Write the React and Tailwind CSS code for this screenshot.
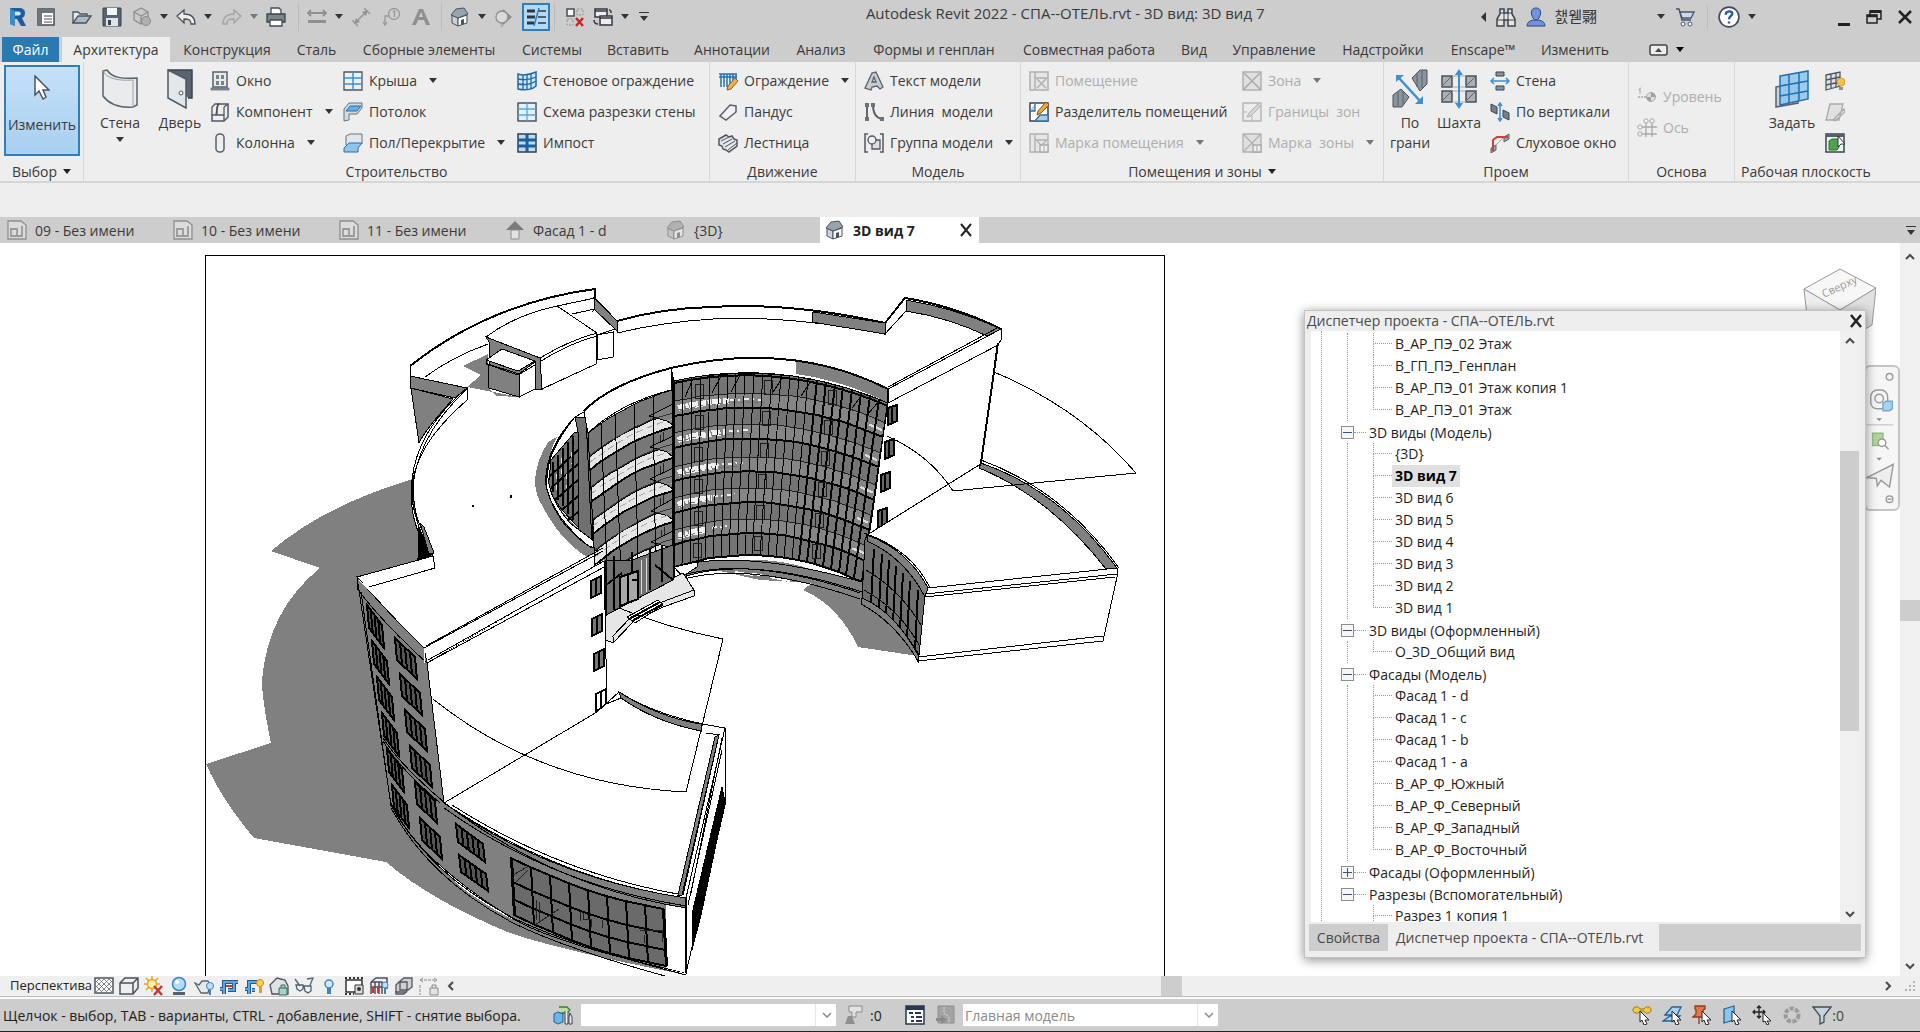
import React, { useState } from 'react';

/* 20x20 icons used by the ribbon and the bars */
const ICONS = {
  logo: (
    <>
      <path d="M2 1h9c4 0 6 2 6 5 0 2.5-1 4-3 5l4 8h-5l-4-7H7v7l-5-2z" fill="#1d5c9e" />
      <path d="M7 4.5h3.5c3 0 3 4 0 4H7z" fill="#cbe3f5" />
      <path d="M2 1l5 3.5V19l-5-2z" fill="#3b8ccb" />
    </>
  ),
  props: (
    <>
      <path d="M2 2h16v16H2z" fill="#fff" stroke="#444c55" strokeWidth="1.5" />
      <path d="M2 2h16v4H2zM2 6h4v12H2z" fill="#6c757e" />
      <path d="M8 9h8M8 12h8M8 15h8" stroke="#444c55" />
    </>
  ),
  open: (
    <>
      <path d="M1 16V5h5l2 2h7v3" fill="#e8edf2" stroke="#4b535b" strokeWidth="1.3" />
      <path d="M1 16l5-7h13l-5 7z" fill="#a9bccd" stroke="#4b535b" strokeWidth="1.3" />
    </>
  ),
  save: (
    <>
      <path d="M1 1h18v18H1z" fill="#5a6470" stroke="#38404a" />
      <path d="M5 1h10v7H5z" fill="#f2f4f6" />
      <path d="M4 11h12v8H4z" fill="#dfe4e8" />
      <path d="M6 13h3v5H6z" fill="#38404a" />
    </>
  ),
  sync: (
    <>
      <path d="M9 1l7 4v8l-7 4-7-4V5z" fill="#c9c9c9" stroke="#8f8f8f" strokeWidth="1.3" />
      <path d="M2 5l7 4 7-4M9 9v8" stroke="#8f8f8f" fill="none" strokeWidth="1.3" />
      <circle cx="14" cy="14" r="4.5" fill="#b0b0b0" stroke="#8b8b8b" />
    </>
  ),
  undo: <path d="M1 9l7-6v4c7 0 11 3 11 10h-4c0-4-2-5-7-5v4z" fill="#eee" stroke="#4b535b" strokeWidth="1.3" />,
  redo: <path d="M19 9l-7-6v4C5 7 1 10 1 17h4c0-4 2-5 7-5v4z" fill="#c9c9c9" stroke="#a2a2a2" strokeWidth="1.3" />,
  print: (
    <>
      <path d="M5 7V1h8l2 2v4" fill="#fff" stroke="#444c55" strokeWidth="1.3" />
      <path d="M1 7h18v8H1z" fill="#7c858e" stroke="#3a424b" strokeWidth="1.3" />
      <path d="M4 13h12v6H4z" fill="#fff" stroke="#444c55" strokeWidth="1.3" />
    </>
  ),
  measure: (
    <>
      <path d="M1 13h18v3H1z" fill="#8f8f8f" />
      <path d="M1 6h18M4 3L1 6l3 3M16 3l3 3-3 3" stroke="#909090" fill="none" strokeWidth="1.8" />
    </>
  ),
  dim: (
    <>
      <path d="M5 15L15 5" stroke="#939393" strokeWidth="1.5" />
      <path d="M3 17l2-6 4 4zM17 3l-6 2 4 4z" fill="#939393" />
      <path d="M1 13l6 6M13 1l6 6" stroke="#939393" strokeWidth="1.3" />
    </>
  ),
  tag: (
    <>
      <circle cx="13" cy="7" r="5.5" fill="none" stroke="#999" strokeWidth="1.3" />
      <path d="M12 5l1.5-1v6M8 9H4v8M2 15l2 3 2-3" stroke="#999" fill="none" strokeWidth="1.3" />
    </>
  ),
  textA: <path d="M1 18L8 2h4l7 16h-4l-2-5H7l-2 5zM8 10h4l-2-5z" fill="#909090" />,
  house: (
    <>
      <path d="M2 8l6 3v8l-6-3z" fill="#cdd3d9" stroke="#4b535b" />
      <path d="M8 11l9-3v8l-9 3z" fill="#f6f7f8" stroke="#4b535b" />
      <path d="M1 8l5-6 8-1 4 6-10 4z" fill="#99a3ad" stroke="#4b535b" />
      <path d="M11 13l3-1v5l-3 1z" fill="#4b535b" />
    </>
  ),
  houseDim: (
    <>
      <path d="M2 8l6 3v8l-6-3z" fill="#c4c4c4" stroke="#8f8f8f" />
      <path d="M8 11l9-3v8l-9 3z" fill="#e4e4e4" stroke="#8f8f8f" />
      <path d="M1 8l5-6 8-1 4 6-10 4z" fill="#b1b1b1" stroke="#8f8f8f" />
      <path d="M11 13l3-1v5l-3 1z" fill="#8f8f8f" />
    </>
  ),
  section: (
    <>
      <path d="M9 2l9 8-9 8z" fill="#8f8f8f" />
      <circle cx="8" cy="10" r="6" fill="#dadada" stroke="#8f8f8f" strokeWidth="1.3" />
      <path d="M8 16v4" stroke="#8f8f8f" />
    </>
  ),
  thin: (
    <>
      <path d="M1 4h8M1 10h8M1 16h7" stroke="#2d3740" strokeWidth="3" />
      <path d="M12 4h8M12 10h8M12 16h8" stroke="#2d3740" strokeWidth="1.3" />
      <path d="M13 1L8 19" stroke="#2a7fc4" strokeWidth="1.5" />
    </>
  ),
  closeHidden: (
    <>
      <path d="M2 2h7v7H2z" fill="#fff" stroke="#454d56" strokeWidth="1.5" />
      <path d="M12 2h6v6h-6zM2 12h6v6H2z" fill="none" stroke="#8c949b" strokeDasharray="2 1.5" />
      <path d="M11 11l7 8M18 11l-7 8" stroke="#c8282d" strokeWidth="2.5" />
    </>
  ),
  windows: (
    <>
      <path d="M2 2h12v8H2zM2 4h12" fill="#eee" stroke="#31383f" strokeWidth="1.5" />
      <path d="M7 9h12v9H7zM7 11h12" fill="#eee" stroke="#31383f" strokeWidth="1.5" />
      <path d="M16 3c2 0 2 1 2 3M1 13c0 3 1 4 4 4" fill="none" stroke="#31383f" strokeWidth="1.5" />
    </>
  ),
  binoculars: (
    <>
      <path d="M4 2h4v4h4V2h4v5l3 5v7h-7v-6H8v6H1v-7l3-5z" fill="#e6e6e6" stroke="#3d444c" strokeWidth="1.5" />
      <path d="M1 13h7M12 13h7M8 6v7M12 6v7M4 6h4M12 6h4" stroke="#3d444c" />
    </>
  ),
  user: (
    <>
      <path d="M1 19c0-4 3-5 6-6h6c3 1 6 2 6 6z" fill="#6f93dc" stroke="#2e437c" />
      <path d="M10 1c4 0 5 3 4.500 6S12 13 10 13s-4-3-4.500-6S6 1 10 1z" fill="#6f93dc" stroke="#2e437c" />
    </>
  ),
  cart: (
    <>
      <path d="M1 2h3l3 11h9" fill="none" stroke="#49566f" strokeWidth="1.5" />
      <path d="M5 5h14l-3 6H7z" fill="#cfd9e8" stroke="#49566f" strokeWidth="1.3" />
      <circle cx="8" cy="17" r="2" fill="#fff" stroke="#49566f" />
      <circle cx="15" cy="17" r="2" fill="#fff" stroke="#49566f" />
    </>
  ),
  help: (
    <>
      <circle cx="10" cy="10" r="9" fill="#fff" stroke="#414b5a" strokeWidth="1.5" />
      <path d="M7 8c0-4 6-4 6-1 0 2-3 2-3 5M10 14v2" fill="none" stroke="#2959a8" strokeWidth="2.2" />
    </>
  ),
  window: (
    <>
      <path d="M3 1h14v15H3z" fill="#e8ebee" stroke="#59626b" strokeWidth="1.5" />
      <path d="M6 4h3v4H6zM11 4h3v4h-3zM6 10h3v4H6zM11 10h3v4h-3z" fill="#78828c" />
      <path d="M1 17h18v2H1z" fill="#8b949c" stroke="#59626b" strokeWidth=".7" />
    </>
  ),
  component: (
    <>
      <path d="M8 2h10v13l-4 4H2v-6h4z" fill="#edeff1" stroke="#4f5861" strokeWidth="1.5" />
      <path d="M2 13V5l3-3h4l-2 3v8h7M14 5v14M14 5l4-3" stroke="#4f5861" fill="none" strokeWidth="1.3" />
    </>
  ),
  column: <rect x="6" y="1" width="8" height="18" rx="3.5" fill="#eceef0" stroke="#59626b" strokeWidth="1.5" />,
  roof: (
    <>
      <path d="M1 1h18v18H1z" fill="#e9f1f8" stroke="#4c555e" strokeWidth="1.3" />
      <path d="M10 1v18M1 7h18M1 13h18" stroke="#3e8fd0" strokeWidth="1.5" />
    </>
  ),
  ceiling: (
    <>
      <path d="M1 7l5-6h13v5l-5 6H6v6l-5 1z" fill="#d4dade" stroke="#68727c" />
      <path d="M3 9l4-5h11l-4 5z" fill="#69b0e4" stroke="#2170b0" />
    </>
  ),
  floor: (
    <>
      <path d="M3 12V3l4-2h12v10" fill="#e4e7ea" stroke="#68727c" />
      <path d="M1 15l5-5h13l-4 5v4H1z" fill="#8dc5ec" stroke="#2170b0" />
    </>
  ),
  curtain: (
    <>
      <path d="M1 3c6 2 11 1 18-2v14c-3 3-10 5-18 3z" fill="#cfe6f7" stroke="#1f68a8" strokeWidth="1.5" />
      <path d="M1 8c6 1 12 1 18-2M1 13c6 1 12 1 18-3M6 4v15M10 4v15M14 3v15" stroke="#1f68a8" fill="none" strokeWidth="1.3" />
    </>
  ),
  grid: (
    <>
      <path d="M1 1h18v18H1z" fill="#e3eff9" stroke="#4c555e" strokeWidth="1.5" />
      <path d="M10 1v18M1 7h18M1 13h18" stroke="#5ba4dc" strokeWidth="1.3" />
    </>
  ),
  mullion: (
    <>
      <path d="M1 1h18v18H1z" fill="#bcdcf4" stroke="#31404e" strokeWidth="1.5" />
      <path d="M10 1v18M1 7h18M1 13h18" stroke="#1d5f98" strokeWidth="3" />
    </>
  ),
  railing: (
    <>
      <path d="M1 3h18M1 6h18M3 3v13M6 3v13M9 3v13M12 3v11M15 3v8M18 3v6" stroke="#2472b4" strokeWidth="1.5" />
      <path d="M9 19l1-4 7-8 3 3-7 8z" fill="#f1b04c" stroke="#8a5a1b" />
    </>
  ),
  ramp: <path d="M2 14L12 3l6 1v6L8 18z" fill="#eff1f3" stroke="#59626b" strokeWidth="1.5" />,
  stair: (
    <>
      <path d="M1 6l7-4 3 2 3-1 2 3 3 1v6l-8 6-3-2-3-1-1-3-3-1z" fill="#e3e6e9" stroke="#4f5861" strokeWidth="1.5" />
      <path d="M3 8l8-4M5 11l9-5M7 14l10-6M10 17l9-7" stroke="#4f5861" />
    </>
  ),
  modelText: <path d="M1 17L8 2l4-1 7 15-3 2-3-3-5 1-1 3zM8 11h4l-2-5z" fill="#c7ccd1" stroke="#59626b" strokeWidth="1.3" />,
  modelLine: (
    <>
      <path d="M3 3v14M9 3c0 9 3 13 9 14" stroke="#4f5861" fill="none" strokeWidth="1.8" />
      <path d="M1 1h4v4H1zM1 15h4v4H1zM7 1h4v4H7zM16 15h4v4h-4z" fill="#68727c" />
    </>
  ),
  group: (
    <>
      <path d="M4 1H1v18h3M16 1h3v18h-3" stroke="#4f5861" fill="none" strokeWidth="1.5" />
      <path d="M8 7h8v9H8z" fill="#dde1e5" stroke="#4f5861" strokeWidth="1.3" />
      <circle cx="8" cy="7" r="4" fill="#eee" stroke="#4f5861" strokeWidth="1.3" />
    </>
  ),
  roomDim: (
    <>
      <path d="M1 1h18v18H1zM6 1v18M6 7h13" fill="#e6e6e6" stroke="#b0b0b0" strokeWidth="1.5" />
      <path d="M8 8l9 9M17 8l-9 9" stroke="#b0b0b0" strokeWidth="1.5" />
    </>
  ),
  separator: (
    <>
      <path d="M1 1h18v18H1z" fill="#fff" stroke="#3b444d" strokeWidth="1.5" />
      <path d="M6 1v8H1M6 19l5-6h8v6z" fill="#a8cdea" stroke="#3d6d96" strokeWidth="1.3" />
      <path d="M8 13l1-4 8-9 3 3-8 8z" fill="#f1a640" stroke="#7b5222" />
    </>
  ),
  roomMarkDim: (
    <>
      <path d="M1 1h18v18H1zM6 1v18M6 7h13M8 8l4 4M17 8l-4 4" fill="#e6e6e6" stroke="#b0b0b0" strokeWidth="1.3" />
      <path d="M11 12h8v7h-8z" fill="#eee" stroke="#a9a9a9" strokeWidth="1.3" />
      <path d="M15 13v5" stroke="#a9a9a9" />
    </>
  ),
  zoneDim: (
    <>
      <path d="M1 1h18v18H1z" fill="#e0e0e0" stroke="#b0b0b0" strokeWidth="1.5" />
      <path d="M2 2l16 16M18 2L2 18" stroke="#a9a9a9" strokeWidth="1.5" />
    </>
  ),
  boundDim: (
    <>
      <path d="M1 1h18v18H1z" fill="#ececec" stroke="#b5b5b5" strokeWidth="1.5" />
      <path d="M5 15l2-4 9-9 2 3-9 9zM1 10h4M10 19v-5" fill="#d5d5d5" stroke="#b0b0b0" />
    </>
  ),
  markDim: (
    <>
      <path d="M1 1h18v18H1zM2 2l16 16M18 2L2 18" fill="#e0e0e0" stroke="#b0b0b0" strokeWidth="1.3" />
      <path d="M11 12h8v7h-8z" fill="#eee" stroke="#a9a9a9" strokeWidth="1.3" />
      <path d="M15 13v5" stroke="#a9a9a9" />
    </>
  ),
  wallOpen: (
    <>
      <path d="M6 1h8v4H6zM6 15h8v4H6z" fill="#8a939b" stroke="#3b444d" />
      <path d="M1 10h18M4 7l-3 3 3 3M16 7l3 3-3 3" stroke="#3e8fd0" fill="none" strokeWidth="1.5" />
    </>
  ),
  vertOpen: (
    <>
      <path d="M1 2l6 3v7l-6-3zM13 8l6 3v7l-6-3z" fill="#78828c" stroke="#3b444d" />
      <path d="M10 1v18M8 4l2-3 2 3M8 16l2 3 2-3" stroke="#3e8fd0" fill="none" strokeWidth="1.5" />
    </>
  ),
  dormer: (
    <>
      <path d="M14 4l5-3v5l-5 3zM1 15l5-3v5l-5 3z" fill="#9aa3ab" stroke="#59626b" />
      <path d="M15 3L6 12" stroke="#aaa" />
      <path d="M3 18V7l4-3h11" stroke="#c9433c" fill="none" strokeWidth="2" />
    </>
  ),
  levelDim: (
    <>
      <path d="M2 3l1-1v5M1 10h8" stroke="#a9a9a9" fill="none" strokeDasharray="2 1" strokeWidth="1.5" />
      <circle cx="14" cy="10" r="4.5" fill="#ddd" stroke="#a9a9a9" />
      <path d="M14 5.500V10h4.500A4.500 4.500 0 0 0 14 5.500zM14 14.500V10H9.500a4.500 4.500 0 0 0 4.500 4.500z" fill="#a0a0a0" />
    </>
  ),
  axisDim: (
    <>
      <circle cx="9" cy="3" r="2.2" fill="none" stroke="#a9a9a9" />
      <circle cx="15" cy="3" r="2.2" fill="none" stroke="#a9a9a9" />
      <circle cx="3" cy="9" r="2.2" fill="none" stroke="#a9a9a9" />
      <circle cx="3" cy="16" r="2.2" fill="none" stroke="#a9a9a9" />
      <path d="M9 5v14M15 5v14M5 9h15M5 16h15" stroke="#a9a9a9" strokeWidth="1.3" />
    </>
  ),
  showPlane: (
    <>
      <path d="M1 4l14-3v14L1 19zM6 3v14M11 2v14M1 9l14-3M1 14l14-3" fill="#dfe3e6" stroke="#4f5861" strokeWidth="1.3" />
      <circle cx="16" cy="11" r="4" fill="#fcc044" stroke="#c98a1c" strokeWidth=".7" />
      <path d="M14 16h4v3h-4z" fill="#8a939b" />
    </>
  ),
  refDim: <path d="M5 2h13l-4 16H1zM5 2l-1 3M8 18l11-11 1 3L10 19z" fill="#e0e0e0" stroke="#aaa" strokeWidth="1.3" />,
  viewer: (
    <>
      <path d="M1 1h18v18H1z" fill="#eef1f3" stroke="#3b444d" strokeWidth="1.5" />
      <path d="M1 1h18v3H1z" fill="#56606a" />
      <path d="M4 8l3-2h7v8l-2 3H4z" fill="#4ea34c" stroke="#2a6e2b" />
      <path d="M13 3v11l3-3h4z" fill="#fff" stroke="#333" />
    </>
  ),
  sheet: (
    <>
      <path d="M1 1h13l5 4v14H1z" fill="#dcdcdc" stroke="#8f8f8f" strokeWidth="1.3" />
      <path d="M4 16V9h6v7zM10 16h5V6" fill="none" stroke="#9a9a9a" strokeWidth="1.8" />
    </>
  ),
  elevation: (
    <>
      <path d="M10 1l9 9H1z" fill="#7b7b7b" />
      <path d="M6 10h8v9H6z" fill="#e2e2e2" stroke="#8f8f8f" />
    </>
  ),
  detail: (
    <>
      <path d="M1 2h18v15H1z" fill="#fff" stroke="#50575e" strokeWidth="1.5" />
      <path d="M1 7l5-5M1 12L11 2M1 17L16 2M6 17L19 4M11 17l8-8M14 2l5 5M9 2l10 10M4 2l15 15M1 4l13 13M1 9l8 8" stroke="#6d757c" strokeWidth=".9" />
    </>
  ),
  cube: <path d="M1 7l5-5h13v10l-5 6H1zM1 7h13v11M14 7l5-5" fill="#eceef0" stroke="#4b535b" strokeWidth="1.5" />,
  sun: (
    <>
      <path d="M8 0v16M0 8h16M2 2l12 12M14 2L2 14" stroke="#e5a526" strokeWidth="1.5" />
      <circle cx="8" cy="8" r="4.5" fill="#fff0b0" stroke="#e5a526" strokeWidth="1.5" />
      <path d="M10 10l8 9M18 10l-8 9" stroke="#c8382d" strokeWidth="2.5" />
    </>
  ),
  ball: (
    <>
      <path d="M4 16h12v3H4z" fill="#56606a" />
      <circle cx="10" cy="8" r="6.5" fill="#b4dcf8" stroke="#3f82c0" strokeWidth="1.5" />
      <circle cx="8" cy="6" r="2" fill="#fff" />
    </>
  ),
  teapot: (
    <>
      <path d="M1 7l4 2 3-4h6l2 4-2 8H7L4 12z" fill="#e6e9eb" stroke="#5a636b" strokeWidth="1.3" />
      <circle cx="16" cy="10" r="3.5" fill="#bfe0fa" stroke="#3f82c0" />
      <path d="M15 14h2v5h-2z" fill="#3f82c0" />
    </>
  ),
  crop: (
    <>
      <path d="M5 18V6h14M1 13h5M15 7v7H9" fill="none" stroke="#24598a" strokeWidth="4" />
      <path d="M5 18V6h14M1 13h5M15 7v7H9" fill="none" stroke="#5aa9e4" strokeWidth="2" />
      <path d="M7 10h7" stroke="#c8382d" strokeWidth="2" />
    </>
  ),
  cropShow: (
    <>
      <path d="M5 18V6h8M1 13h5M11 14h-3" fill="none" stroke="#24598a" strokeWidth="4" />
      <path d="M5 18V6h8M1 13h5M11 14h-3" fill="none" stroke="#5aa9e4" strokeWidth="2" />
      <circle cx="16" cy="7" r="3.5" fill="#ffcf5c" stroke="#c98a1c" />
      <path d="M15 11h3v6h-3z" fill="#e59a2a" />
    </>
  ),
  lock3d: (
    <>
      <path d="M1 9l7-7 8 2 3 6v8H3z" fill="#dfe2e5" stroke="#4b535b" strokeWidth="1.3" />
      <path d="M10 12h8v7h-8zM12 12V9h4v3" fill="#a9cfc6" stroke="#3a6a60" />
    </>
  ),
  glasses: <path d="M1 3l5 7M13 3l6-1-3 7M2 9h7v4l-3 2-3-2zM10 10h7v5l-3 2-3-2z" fill="#eef3f6" stroke="#4f6473" strokeWidth="1.3" />,
  bulb: (
    <>
      <circle cx="10" cy="8" r="4" fill="#d3eafc" stroke="#3f82c0" strokeWidth="1.5" />
      <path d="M8 12h4v6H8z" fill="#3f82c0" />
    </>
  ),
  film: (
    <>
      <path d="M2 4h16v12H2z" fill="#fff" stroke="#333" strokeWidth="1.5" />
      <path d="M1 2h18M1 18h9" stroke="#333" strokeWidth="2" strokeDasharray="2 2" />
      <path d="M11 9h8v9h-8z" fill="#ddd" stroke="#333" />
      <circle cx="15" cy="13" r="2" fill="#333" />
    </>
  ),
  analytic: (
    <>
      <path d="M2 6l5-4h11v11M2 6h11v12M2 6v12M6 6v12M10 6v12M2 11h11" fill="none" stroke="#4b535b" strokeWidth="1.5" />
      <path d="M4 17v-6M9 17v-6" stroke="#c8382d" strokeWidth="2" />
      <circle cx="16" cy="9" r="3" fill="#bfe0fa" stroke="#3f82c0" />
      <path d="M15 12h2v6h-2z" fill="#3f82c0" />
    </>
  ),
  displace: <path d="M6 5l4-3h8v9l-4 3H6zM2 9l3-3h8v9l-3 3H2zM1 16h12" fill="#cdd1d5" stroke="#50585f" strokeWidth="1.3" />,
  constraint: (
    <>
      <path d="M1 4h17M4 2L1 4l3 2M15 2l3 2-3 2M1 9v10" stroke="#8d8d8d" fill="none" strokeDasharray="3 1" />
      <path d="M11 12h8v7h-8zM13 12V9h4v3" fill="#e3e3e3" stroke="#8d8d8d" />
    </>
  ),
  worksets: (
    <>
      <path d="M6 2h8l3 3-3 3H9v3" fill="#bce09c" stroke="#3f7a2c" strokeWidth="1.3" />
      <path d="M1 9l4-2 5 2v8l-5 2-4-2z" fill="#6fb4e6" stroke="#1f5f96" />
      <path d="M12 6v13h3V6M17 8l-1 4v7h3v-7z" fill="#eee" stroke="#3b444d" />
    </>
  ),
  editable: (
    <>
      <path d="M5 1h13v6h-6v5H8V7H5z" fill="#e3e3e3" stroke="#8a8a8a" />
      <path d="M1 19l3-8h4l3 8z" fill="#909090" />
    </>
  ),
  options: (
    <>
      <path d="M1 1h18v18H1z" fill="#fff" stroke="#27384f" strokeWidth="1.5" />
      <path d="M1 1h18v4H1z" fill="#27384f" />
      <path d="M4 8h4M10 8h6M6 12h3M11 12h6M6 16h3M11 16h6" stroke="#27384f" strokeWidth="2" />
    </>
  ),
  optionDim: (
    <>
      <path d="M3 1h16v17H3z" fill="#a3a3a3" stroke="#8c8c8c" />
      <path d="M9 2v6l5 4v6" stroke="#ddd" fill="none" strokeDasharray="2 1" />
      <path d="M1 13h5v-3l6 5-6 4v-3H1z" fill="#8a8a8a" />
    </>
  ),
  selLink: (
    <>
      <path d="M1 5c0-4 6-4 7-1h4c1-3 7-3 7 1s-6 4-7 1H8C7 9 1 9 1 5z" fill="#f5c93e" stroke="#9a7715" />
      <path d="M8 6l9 9h-4l2 4-3 1-2-5-2 2z" fill="#fff" stroke="#222" />
    </>
  ),
  selUnder: (
    <>
      <path d="M1 16l7-5h10l-5 5zM3 10l7-8h9l-4 8z" fill="#a9d2f1" stroke="#256397" strokeWidth="1.3" />
      <path d="M10 6l9 9h-4l2 4-3 1-2-5-2 2z" fill="#fff" stroke="#222" />
    </>
  ),
  selPin: (
    <>
      <path d="M3 1h10v3l-2 1v4l3 3H1l3-3V5L3 4zM7 12v7" fill="#e4774a" stroke="#93391b" strokeWidth="1.3" />
      <path d="M10 6l9 9h-4l2 4-3 1-2-5-2 2z" fill="#fff" stroke="#222" />
    </>
  ),
  selFace: (
    <>
      <path d="M2 4l10-3v14L2 18z" fill="#8cc5ee" stroke="#256397" strokeWidth="1.3" />
      <path d="M10 6l9 9h-4l2 4-3 1-2-5-2 2z" fill="#fff" stroke="#222" />
    </>
  ),
  selDrag: (
    <>
      <path d="M7 1v12M1 7h12M5 3l2-2 2 2M5 11l2 2 2-2M3 5L1 7l2 2M11 5l2 2-2 2" stroke="#222" fill="none" strokeWidth="1.3" />
      <path d="M11 8l8 8h-4l2 3-2 1-2-4-2 1z" fill="#fff" stroke="#222" />
    </>
  ),
  gear: <circle cx="10" cy="10" r="6.5" fill="none" stroke="#9b9b9b" strokeWidth="4" strokeDasharray="4 1.5" />,
  funnel: <path d="M1 2h18l-7 9v6l-4 2v-8z" fill="#c9d2da" stroke="#434c55" strokeWidth="1.3" />,
};

const Icon = ({ name, className = 'h-5 w-5' }) => (
  <svg viewBox="0 0 20 20" className={`shrink-0 ${className}`} aria-hidden="true">
    {ICONS[name]}
  </svg>
);

const Arrow = ({ className = 'text-[#333]' }) => (
  <svg viewBox="0 0 8 5" className={`h-[5px] w-2 shrink-0 ${className}`} aria-hidden="true">
    <path d="M0 0h8L4 5z" fill="currentColor" />
  </svg>
);

const Chevron = ({ d, className = 'h-3 w-3' }) => (
  <svg viewBox="0 0 12 12" className={`shrink-0 ${className}`} aria-hidden="true">
    <path d={d} fill="none" stroke="#4a4a4a" strokeWidth="2" />
  </svg>
);

const QUICK = [
  { icon: 'logo', cls: 'ml-2 w-5', label: 'Revit' },
  { icon: 'props', cls: 'ml-2 w-5', label: 'Начальный вид' },
  { icon: 'open', cls: 'ml-4 w-5', label: 'Открыть' },
  { icon: 'save', cls: 'ml-2.5 w-5', label: 'Сохранить' },
  { icon: 'sync', cls: 'ml-2.5 w-5', label: 'Синхронизация', arrow: true },
  { icon: 'undo', cls: 'ml-2 w-5', label: 'Отменить', arrow: true },
  { icon: 'redo', cls: 'ml-2.5 w-5', label: 'Повторить', arrow: true, dim: true },
  { icon: 'print', cls: 'ml-2 w-5', label: 'Печать' },
  { sep: true, cls: 'ml-3' },
  { icon: 'measure', cls: 'ml-2 w-5', label: 'Измерить', arrow: true },
  { icon: 'dim', cls: 'ml-2 w-5', label: 'Размер' },
  { icon: 'tag', cls: 'ml-2.5 w-5', label: 'Марка' },
  { icon: 'textA', cls: 'ml-2.5 w-5', label: 'Текст' },
  { sep: true, cls: 'ml-2.5' },
  { icon: 'house', cls: 'ml-2 w-5', label: '3D вид', arrow: true },
  { icon: 'section', cls: 'ml-2 w-5', label: 'Разрез' },
  { icon: 'thin', cls: 'ml-2 w-7 h-7 border-2 border-[#2f7fb5] bg-[#b5d9f5]', label: 'Тонкие линии' },
  { sep: true, cls: 'ml-1' },
  { icon: 'closeHidden', cls: 'ml-2.5 w-5', label: 'Закрыть неактивные' },
  { icon: 'windows', cls: 'ml-2 w-5', label: 'Переключить окна', arrow: true },
];

const TitleBar = () => (
  <header className="flex h-[37px] items-center bg-[#cdcdcd]">
    <div className="flex items-center pb-1">
      {QUICK.map((q, i) =>
        q.sep ? (
          <span key={i} className={`h-7 w-px bg-[#bcbcbc] ${q.cls}`} />
        ) : (
          <React.Fragment key={i}>
            <button aria-label={q.label} className={`flex items-center justify-center ${q.cls}`}>
              <Icon name={q.icon} />
            </button>
            {q.arrow && <Arrow className={q.dim ? 'ml-2 text-[#777]' : 'ml-2 text-[#333]'} />}
          </React.Fragment>
        )
      )}
      <button aria-label="Настройка панели" className="ml-2.5 flex flex-col items-center gap-[3px]">
        <span className="h-px w-2.5 bg-[#333]" />
        <Arrow />
      </button>
    </div>
    <h1 className="flex-1 pb-3 text-center text-[15px] leading-6 text-[#3a3a3a]">
      Autodesk Revit 2022 - СПА--ОТЕЛЬ.rvt - 3D вид: 3D вид 7
    </h1>
    <div className="flex items-center pb-1">
      <svg viewBox="0 0 5 10" className="h-2.5 w-[5px]" aria-hidden="true">
        <path d="M5 0v10L0 5z" fill="#333" />
      </svg>
      <button aria-label="Поиск" className="ml-2.5">
        <Icon name="binoculars" />
      </button>
      <button className="ml-2.5 flex items-center gap-2 text-[15px] text-[#3a3a3a]">
        <Icon name="user" />
        <span>챐웯翾</span>
      </button>
      <Arrow className="ml-[60px] text-[#333]" />
      <button aria-label="Магазин" className="ml-2.5">
        <Icon name="cart" />
      </button>
      <span className="ml-3 h-6 w-px bg-[#bcbcbc]" />
      <button aria-label="Справка" className="ml-2.5">
        <Icon name="help" className="h-[22px] w-[22px]" />
      </button>
      <Arrow className="ml-2 text-[#333]" />
      <button aria-label="Свернуть" className="ml-[82px] flex h-5 w-3 items-end pb-px">
        <span className="h-[3px] w-full bg-[#222]" />
      </button>
      <button aria-label="Восстановить" className="ml-4">
        <svg viewBox="0 0 16 16" className="h-4 w-4">
          <path d="M4 6V2h11v8h-4" fill="none" stroke="#222" strokeWidth="1.5" />
          <path d="M4 2.500h11" stroke="#222" strokeWidth="3" />
          <path d="M1 6h10v8H1z" fill="#cdcdcd" stroke="#222" strokeWidth="1.5" />
          <path d="M1 7h10" stroke="#222" strokeWidth="2.5" />
        </svg>
      </button>
      <button aria-label="Закрыть" className="mr-2 ml-4">
        <svg viewBox="0 0 14 14" className="h-3.5 w-3.5">
          <path d="M1 1l12 12M13 1L1 13" stroke="#222" strokeWidth="2.5" />
        </svg>
      </button>
    </div>
  </header>
);

const TABS = [
  ['Архитектура', 'w-[108px]'],
  ['Конструкция', 'w-[114px]'],
  ['Сталь', 'w-[65px]'],
  ['Сборные элементы', 'w-[160px]'],
  ['Системы', 'w-[86px]'],
  ['Вставить', 'w-[86px]'],
  ['Аннотации', 'w-[102px]'],
  ['Анализ', 'w-[76px]'],
  ['Формы и генплан', 'w-[150px]'],
  ['Совместная работа', 'w-[160px]'],
  ['Вид', 'w-[50px]'],
  ['Управление', 'w-[110px]'],
  ['Надстройки', 'w-[108px]'],
  ['Enscape™', 'w-[92px]'],
  ['Изменить', 'w-[92px]'],
];

const RibbonTabs = ({ active, onSelect }) => (
  <nav className="flex h-[25px] items-stretch bg-[#cdcdcd] pl-0.5 text-[14px] whitespace-nowrap text-[#3a3a3a]">
    <button className="mr-[3px] w-[57px] bg-[#2a7ab0] text-white">Файл</button>
    {TABS.map(([name, width]) => (
      <button
        key={name}
        onClick={() => onSelect(name)}
        className={`${width} ${name === active ? 'bg-[#eee]' : ''}`}
      >
        {name}
      </button>
    ))}
    <button aria-label="Свернуть ленту" className="ml-7 flex items-center gap-2">
      <svg viewBox="0 0 19 12" className="h-3 w-[19px]">
        <rect x="1" y="1" width="17" height="10" rx="2" fill="#eee" stroke="#444" strokeWidth="1.5" />
        <path d="M6 8h7L9.500 4z" fill="#444" />
      </svg>
      <Arrow className="text-black" />
    </button>
  </nav>
);

const Item = ({ icon, children, arrow, dim }) => (
  <button className={`flex h-[31px] items-center gap-1.5 whitespace-pre ${dim ? 'text-[#adadad]' : 'text-[#3a3a3a]'}`}>
    <Icon name={icon} />
    {children}
    {arrow && <Arrow className={dim ? 'ml-1.5 text-[#777]' : 'ml-1.5 text-[#333]'} />}
  </button>
);

const Big = ({ label, width, arrow, children }) => (
  <button className={`flex shrink-0 flex-col items-center pt-1 ${width}`}>
    <svg viewBox="0 0 36 40" className="h-10 w-9" aria-hidden="true">
      {children}
    </svg>
    <span className="mt-1 leading-5">{label}</span>
    {arrow && <Arrow className="mt-1 text-[#333]" />}
  </button>
);

const Panel = ({ title, width, arrow, children }) => (
  <section className={`flex flex-col border-r border-[#d8d8d8] pt-[3px] ${width}`}>
    <div className="flex h-24">{children}</div>
    <h2 className="flex h-5 items-center justify-center gap-1.5 whitespace-nowrap">
      {title}
      {arrow && <Arrow className="text-[#222]" />}
    </h2>
  </section>
);

const Ribbon = () => (
  <div className="flex h-[121px] border-b-2 border-[#d6d6d6] bg-[#eee] text-[14px] text-[#3a3a3a]">
    <Panel title="Выбор" width="w-[84px]" arrow>
      <button className="ml-1 flex h-[91px] w-[76px] flex-col items-center border-2 border-[#2f7fb5] bg-gradient-to-b from-[#c4e0f8] to-[#a9d0f0] pt-2">
        <svg viewBox="0 0 16 26" className="h-[26px] w-4" aria-hidden="true">
          <path d="M1 1v19l4-4 4 8 3-2-3-7h6z" fill="#fff" stroke="#4b535b" strokeWidth="1.5" />
        </svg>
        <span className="mt-3.5 leading-5">Изменить</span>
      </button>
    </Panel>

    <Panel title="Строительство" width="w-[626px]">
      <Big label="Стена" width="ml-2 w-14" arrow>
        <path d="M1 2l4-1c5 8 15 9 30 8v27l-4 2C17 39 7 35 1 27z" fill="#e9ebed" stroke="#59626b" strokeWidth="1.5" />
        <path d="M1 2c5 8 15 10 30 9v27" fill="none" stroke="#9aa2aa" />
      </Big>
      <Big label="Дверь" width="ml-1 w-14">
        <path d="M6 1h24v28h-4" fill="#5b6570" stroke="#3b444d" strokeWidth="1.5" />
        <path d="M6 1l18 9v29L6 29z" fill="#e4e7ea" stroke="#4f5861" strokeWidth="1.5" />
        <circle cx="19" cy="24" r="2" fill="#fff" stroke="#4f5861" />
      </Big>
      <div className="ml-0.5 w-[133px]">
        <Item icon="window">Окно</Item>
        <Item icon="component" arrow>Компонент</Item>
        <Item icon="column" arrow>Колонна</Item>
      </div>
      <div className="w-[174px]">
        <Item icon="roof" arrow>Крыша</Item>
        <Item icon="ceiling">Потолок</Item>
        <Item icon="floor" arrow>Пол/Перекрытие</Item>
      </div>
      <div>
        <Item icon="curtain">Стеновое ограждение</Item>
        <Item icon="grid">Схема разрезки стены</Item>
        <Item icon="mullion">Импост</Item>
      </div>
    </Panel>

    <Panel title="Движение" width="w-[146px]">
      <div className="pl-2">
        <Item icon="railing" arrow>Ограждение</Item>
        <Item icon="ramp">Пандус</Item>
        <Item icon="stair">Лестница</Item>
      </div>
    </Panel>

    <Panel title="Модель" width="w-[165px]">
      <div className="pl-2">
        <Item icon="modelText">Текст модели</Item>
        <Item icon="modelLine">Линия  модели</Item>
        <Item icon="group" arrow>Группа модели</Item>
      </div>
    </Panel>

    <Panel title="Помещения и зоны" width="w-[363px]" arrow>
      <div className="w-[221px] pl-2">
        <Item icon="roomDim" dim>Помещение</Item>
        <Item icon="separator">Разделитель помещений</Item>
        <Item icon="roomMarkDim" dim arrow>Марка помещения</Item>
      </div>
      <div>
        <Item icon="zoneDim" dim arrow>Зона</Item>
        <Item icon="boundDim" dim>Границы  зон</Item>
        <Item icon="markDim" dim arrow>Марка  зоны</Item>
      </div>
    </Panel>

    <Panel title="Проем" width="w-[245px]">
      <Big label={<>По<br />грани</>} width="ml-0.5 w-12">
        <path d="M20 9l8-8h7v14l-7 7zM1 26l8-6 8 8-7 10H1z" fill="#8c959e" stroke="#4b535b" />
        <path d="M25 5v13M30 2v17M6 23v14M11 22v14" stroke="#59626b" />
        <path d="M6 8l23 25" stroke="#3e8fd0" strokeWidth="2.5" />
        <path d="M4 6h8l-8 7zM31 35v-8l-8 8z" fill="#3e8fd0" />
      </Big>
      <Big label="Шахта" width="w-[50px]">
        <path d="M1 7h10v11H1zM25 7h10v11H25zM1 22h10v11H1zM25 22h10v11H25z" fill="#a8afb6" stroke="#4b535b" strokeWidth="1.5" />
        <path d="M2 16l8-8M26 16l8-8M2 31l8-8M26 31l8-8" stroke="#59626b" />
        <path d="M11 7h14M11 18h14M11 22h14M11 33h14" stroke="#aaa" />
        <path d="M18 2v36" stroke="#3e8fd0" strokeWidth="2" />
        <path d="M14 6l4-6 4 6zM14 34l4 6 4-6z" fill="#3e8fd0" />
      </Big>
      <div className="ml-1.5">
        <Item icon="wallOpen">Стена</Item>
        <Item icon="vertOpen">По вертикали</Item>
        <Item icon="dormer">Слуховое окно</Item>
      </div>
    </Panel>

    <Panel title="Основа" width="w-[106px]">
      <div className="pt-4 pl-2">
        <Item icon="levelDim" dim>Уровень</Item>
        <Item icon="axisDim" dim>Ось</Item>
      </div>
    </Panel>

    <section className="flex flex-1 flex-col pt-[3px]">
      <div className="flex h-24">
        <Big label="Задать" width="ml-7 w-[58px]">
          <path d="M2 18l22-4v20L2 38z" fill="#c9d4dd" stroke="#59626b" strokeWidth="1.5" />
          <path d="M6 7l28-5v28L6 36z" fill="#8cc5ee" fillOpacity=".85" stroke="#2170b0" strokeWidth="1.5" />
          <path d="M15 6v28M25 4v28M6 17l28-5M6 27l28-5" stroke="#2170b0" strokeWidth="1.5" />
        </Big>
        <div className="ml-1">
          <Item icon="showPlane" />
          <Item icon="refDim" />
          <Item icon="viewer" />
        </div>
      </div>
      <h2 className="flex h-5 items-center pl-1.5 whitespace-nowrap">Рабочая плоскость</h2>
    </section>
  </div>
);

const DOCS = [
  { icon: 'sheet', name: '09 - Без имени', width: 'w-[166px]' },
  { icon: 'sheet', name: '10 - Без имени', width: 'w-[166px]' },
  { icon: 'sheet', name: '11 - Без имени', width: 'w-[166px]' },
  { icon: 'elevation', name: 'Фасад 1 - d', width: 'w-[161px]' },
  { icon: 'houseDim', name: '{3D}', width: 'w-[161px]' },
];

const DocTabs = () => (
  <div className="flex h-[26px] shrink-0 items-stretch bg-[#cdcdcd] text-[14px] text-[#3a3a3a]">
    {DOCS.map((doc) => (
      <button key={doc.name} className={`flex items-center gap-2 pl-[7px] ${doc.width}`}>
        <Icon name={doc.icon} />
        {doc.name}
      </button>
    ))}
    <div className="flex w-[159px] items-center bg-white pr-1.5 pl-[5px]">
      <button className="flex flex-1 items-center gap-2 font-bold text-[#222]">
        <Icon name="house" />
        3D вид 7
      </button>
      <button aria-label="Закрыть вид">
        <svg viewBox="0 0 14 14" className="h-3.5 w-3.5">
          <path d="M2 1l10 12M12 1L2 13" stroke="#222" strokeWidth="2" />
        </svg>
      </button>
    </div>
    <button aria-label="Список видов" className="mr-1 ml-auto flex flex-col items-center justify-center gap-[3px]">
      <span className="h-px w-2.5 bg-[#333]" />
      <Arrow />
    </button>
  </div>
);

/* ---- 3D view ---- */

const quad = (a, b, c) => (u) => a + b * u + c * u * u;
const pts = (list) => list.map((p) => p.join(',')).join(' ');
const range = (n) => Array.from({ length: n }, (_, i) => i);

// main curved glazing
const mainTop = quad(381, -47, 69);
const mainBottom = quad(567, -60, 75);
const mainPoint = (u, v) => {
  const x = (674 + u * 214) * (1 - v) + (674 + u * 188) * v;
  const y = mainTop(u) * (1 - v) + mainBottom(u) * v;
  return [Math.round(x), Math.round(y)];
};
const mainRow = (v, from = 0, to = 1) => range(17).map((i) => mainPoint(from + ((to - from) * i) / 16, v));

// glazing to the left of the corner
const sideTop = quad(433, -65, 22);
const sidePoint = (u, v) => {
  const x = 588 + u * 85 + (1 - u) * v * 10;
  const y = sideTop(u) + v * 190;
  return [Math.round(x), Math.round(y)];
};
const sideRow = (v) => range(9).map((i) => sidePoint(i / 8, v));

const MAIN_SLABS = [0.19, 0.36, 0.54, 0.71, 0.88];
const SIDE_SLABS = [0.195, 0.36, 0.53, 0.695, 0.86];

const MainGlazing = () => (
  <g>
    <polygon points={pts([...mainRow(0), ...mainRow(1).reverse()])} fill="#747474" stroke="#000" />
    {MAIN_SLABS.map((v) => (
      <g key={v}>
        <polygon points={pts([...mainRow(v - 0.08), ...mainRow(v).reverse()])} fill="#858585" />
        <polyline points={pts(mainRow(v - 0.08))} stroke="#222" fill="none" />
        <polyline points={pts(mainRow(v))} stroke="#000" strokeWidth="2" fill="none" />
        <polyline points={pts(mainRow(v - 0.04, 0.02, 0.3 - v * 0.15))} stroke="#f0f0f0" strokeWidth="6" strokeDasharray="6 2 3 1 9 2" fill="none" />
        <polyline points={pts(mainRow(v - 0.03, 0.02, 0.5 - v * 0.3))} stroke="#707070" strokeDasharray="4 3" fill="none" />
        <polyline points={pts(mainRow(v - 0.045, 0.2, 0.45 - v * 0.2))} stroke="#eee" strokeWidth="2" strokeDasharray="5 3 2 4" fill="none" />
        <polyline points={pts(mainRow(v - 0.035, 0.93, 0.99))} stroke="#ddd" strokeWidth="2" fill="none" />
      </g>
    ))}
    {range(25).map((i) => {
      const u = i / 24;
      const [x1, y1] = mainPoint(u, 0);
      const [x2, y2] = mainPoint(u, 1);
      return <line key={i} x1={x1} y1={y1} x2={x2} y2={y2} stroke="#000" strokeWidth={i > 15 ? 2 : 1} />;
    })}
    {range(6).map((i) =>
      [0.1, 0.42, 0.72].map((u) => {
        const [x, y] = mainPoint(u, 0.02 + i * 0.172);
        return <rect key={`${i}-${u}`} x={x} y={y + 3} width="8" height="14" fill="none" stroke="#1c1c1c" />;
      })
    )}
    {[0.05, 0.18, 0.27, 0.47, 0.6, 0.84, 0.92].map((u) => {
      const [x1, y1] = mainPoint(u, 0.1);
      const [x2, y2] = mainPoint(u + 0.04, 0.01);
      return <line key={u} x1={x1} y1={y1} x2={x2} y2={y2} stroke="#000" />;
    })}
    <polyline points={pts(mainRow(1))} stroke="#000" strokeWidth="2" fill="none" />
  </g>
);

const SideGlazing = () => (
  <g>
    <polygon points={pts([...sideRow(0), ...sideRow(1).reverse()])} fill="#777" stroke="#000" />
    {SIDE_SLABS.map((v) => (
      <g key={v}>
        <polygon points={pts([...sideRow(v - 0.07), ...sideRow(v).reverse()])} fill="#e6e6e6" />
        <polygon points={pts([sidePoint(0.72, v - 0.1), sidePoint(1, v - 0.12), sidePoint(1, v - 0.01), sidePoint(0.93, v - 0.04)])} fill="#808080" />
        <polyline points={pts(sideRow(v - 0.04))} stroke="#aaa" strokeDasharray="7 4" fill="none" />
        <polyline points={pts(sideRow(v - 0.075))} stroke="#333" fill="none" />
        <polyline points={pts(sideRow(v))} stroke="#000" strokeWidth="2" fill="none" />
        <polyline points={pts([sidePoint(0.84, v + 0.02), sidePoint(0.84, v + 0.09), sidePoint(0.88, v + 0.08), sidePoint(0.88, v + 0.01)])} stroke="#222" fill="none" />
      </g>
    ))}
    {[0, 0.15, 0.32, 0.54, 0.77].map((u) => {
      const [x1, y1] = sidePoint(u, 0);
      const [x2, y2] = sidePoint(u, 1);
      return <line key={u} x1={x1} y1={y1} x2={x2} y2={y2} stroke="#000" />;
    })}
    <path d="M673 368V580" stroke="#000" strokeWidth="3" />
  </g>
);

// slanted facade window with vertical bars
const FacadeWindow = ({ x, y, w, h, slope, bars = 4 }) => (
  <g>
    <path d={`M${x} ${y}l${w} ${slope}l2 ${h}l${-w} ${-slope}z`} fill="#555" stroke="#000" strokeWidth="2" />
    {range(bars - 1).map((i) => {
      const t = (i + 1) / bars;
      return (
        <line
          key={i}
          x1={x + w * t}
          y1={y + slope * t}
          x2={x + w * t + 2}
          y2={y + slope * t + h}
          stroke="#000"
          strokeWidth="2"
        />
      );
    })}
  </g>
);

// glazing of the low wing at the front
const wingTop = quad(858, 75, -24);
const wingBottom = quad(915, 76, -25);

const Building = () => (
  <svg
    viewBox="0 243 1900 733"
    preserveAspectRatio="xMinYMin slice"
    className="absolute inset-0 h-full w-full"
    shapeRendering="crispEdges"
    fill="none"
    stroke="#000"
    role="img"
    aria-label="3D вид здания"
  >
    {/* shadows on the ground */}
    <g fill="#808080" stroke="none">
      <path d="M271 551Q325 505 413 479L440 556L358 577L361 600L391 805Q420 850 461 887Q510 925 580 946L686 975Q560 950 510 933Q430 900 386 862L254 838Q222 800 206 764L271 743Q262 700 262 680Q268 610 320 568Z" />
      <path d="M697 567Q750 553 800 566L862 583V600L893 620L918 656L858 647Q838 605 803 590L812 583L760 580L720 571Z" />
    </g>
    <path d="M735 572l18 3M770 577l20 4M752 574l10 1" stroke="#fff" strokeWidth="2" />

    {/* view frame */}
    <path d="M205 976V255H1164V976" />

    {/* roof */}
    <path d="M410 366Q490 303 595 289V298L617 321Q663 308 712 307Q790 302 885 323L905 298Q955 306 1001 329V340L998 345L981 463L877 545L888 389Q790 345 671 368Q610 385 584 412L575 417Q530 470 552 500Q565 530 603 550L604 561L427 663L424 648Q390 615 357 577L433 556Q390 480 440 417L467 388L411 388Z" fill="#fff" />
    <path d="M410 366Q490 303 595 289V298M617 321Q663 308 712 307Q790 302 885 323L905 298Q955 306 1001 329" strokeWidth="2" />
    <path d="M425 377Q452 357 488 344M617 333Q663 322 713 319Q790 315 884 334V323M617 321v12" />
    <path d="M813 312L885 323V334L812 322Z" fill="#808080" />
    <path d="M906 300Q955 308 1001 329L987 336Q950 318 906 311Z" fill="#808080" />
    <path d="M885 334L906 311V300" />
    <path d="M888 389L1001 329V340L998 345L888 403Z" fill="#fff" />
    <path d="M888 387L999 327M888 405L998 345" />

    {/* back corner on the left */}
    <path d="M411 388L453 399Q425 430 419 443Z" fill="#808080" />
    <path d="M410 376V388L455 398L467 388Z" fill="#808080" />
    <path d="M410 366V376L467 388" />
    <path d="M467 388V400Q392 465 419 523L433 556Q407 525 412 480Q417 430 467 388Z" fill="#fff" />
    <path d="M467 389Q412 440 412 500Q417 530 433 556" />
    <path d="M419 527L431 556L418 559Z" fill="#000" />
    <path d="M424 527L434 553L429 554L420 523Z" fill="#808080" />
    <path d="M433 556L435 568L369 587" />

    {/* roof boxes */}
    <g>
      <path d="M463 366L488 354V388L497 396L519 397L467 387L481 375Z" fill="#808080" stroke="none" />
      <path d="M557 306L595 298L597 310L615 329L597 335ZM597 335L613 332V357L597 360Z" fill="#fff" />
      <path d="M572 314L595 309L592 312" />
      <path d="M594 298L617 321V331L595 310Z" fill="#808080" />
      <path d="M486 337Q515 315 557 306L597 333L596 364L542 389L489 388V342Z" fill="#fff" />
      <path d="M486 337L540 358L542 389H535L489 388V342Z" fill="#808080" />
      <path d="M486 337L540 358Q570 340 597 333M541 361Q570 343 597 336" />
      <path d="M486 337Q515 315 557 306L597 333Q570 340 540 358Z" fill="#fff" />
      <path d="M488 364L519 374V397L489 388Z" fill="#808080" />
      <path d="M519 374L535 362V389L519 397Z" fill="#fff" />
      <path d="M486 360L502 349L535 361L518 371Z" fill="#fff" />
      <path d="M486 360V364L518 375L535 365V361" />
    </g>
    <path d="M473 505v2M511 495v3" strokeWidth="2" />

    {/* courtyard */}
    <path d="M548 442Q525 480 543 507Q560 540 587 557L603 550Q550 510 547 477Q547 455 557 437Z" fill="#808080" stroke="none" />
    <path d="M575 432L551 460L548 490L562 510L592 542V432Z" fill="#707070" />
    <path d="M553 462v30M558 455v45M563 448v58M568 442v72M573 436v84" strokeWidth="2" />
    <path d="M550 476l28 -26M551 488l27 -24M555 500l23 -20M562 510l16 -14M568 520l10 -8" strokeWidth="2" />
    <path d="M561 458v22M566 474v14M556 474v16M571 452v12" stroke="#ddd" strokeDasharray="5 6" />
    <path d="M575 417H586L592 545L578 530V432Z" fill="#707070" />
    <path d="M575 417Q545 455 548 478Q550 500 570 523L603 548V552L587 545Q555 518 547 490Q543 450 575 417Z" fill="#fff" />
    <path d="M573 419Q543 455 546 485Q555 525 592 548" />
    <SideGlazing />
    <MainGlazing />
    <path d="M584 412Q610 383 671 368V390Q620 403 588 433Z" fill="#fff" />
    <path d="M584 411Q610 384 671 368" strokeWidth="2" />
    <path d="M671 368Q790 340 888 389V403Q780 357 674 381Z" fill="#fff" />
    <path d="M796 360Q845 369 888 389V403Q845 381 796 374Z" fill="#808080" stroke="none" />
    <path d="M671 368Q790 340 888 389V403M674 383Q780 360 888 406" strokeWidth="2" />

    {/* end wall and its windows */}
    <path d="M888 403L998 345L981 463L870 538Z" fill="#fff" stroke="none" />
    <path d="M888 403L862 582" />
    <path d="M888 403L998 345M979 468L877 532" />
    <path d="M998 343L981 463" strokeWidth="2" />
    {[[888, 408], [885, 442], [881, 475], [878, 511]].map(([x, y]) => (
      <path key={y} d={`M${x} ${y}l9 -3v16l-9 4zM${x + 4} ${y}v16`} fill="#666" strokeWidth="2" />
    ))}

    {/* base of the courtyard */}
    <path d="M674 567Q740 548 862 582V592Q750 555 683 577Z" fill="#808080" />
    <path d="M674 567L697 562V567L683 576Z" fill="#fff" />
    <path d="M683 575Q750 556 860 593M684 579Q750 561 860 599" />

    {/* entrance */}
    <path d="M604 615L673 578L683 573L694 590V596L663 607L633 622L613 643L606 640Z" fill="#e6e6e6" />
    <path d="M694 590L662 602L631 617L612 637M613 637v6" />
    <path d="M606 560L632 560L673 545V580L606 615Z" fill="#707070" />
    <path d="M606 560v56M614 556v54M632 552v48M650 548v42M662 546v36M606 585l16 -12M655 565l18 15" strokeWidth="2" />
    <path d="M641 560v34M646 558v34" stroke="#ddd" />
    <path d="M620 577l18 -6v28l-18 7zM628 575v28M632 580h7" fill="#a8a8a8" strokeWidth="2" />
    <path d="M627 617L658 600L663 605L635 623Z" fill="#fff" />
    <path d="M629 619l31 -17M632 621l31 -17" strokeWidth="2" />

    {/* right wing */}
    <path d="M867 535L979 465L981 463Q1060 490 1117 568V577L1103 641L918 661L925 595Q910 555 867 535Z" fill="#fff" />
    <path d="M981 463Q1060 490 1117 568L1106 569Q1050 497 979 468Z" fill="#808080" />
    <path d="M981 460Q1063 490 1119 568" />
    <path d="M867 535Q908 550 928 588L925 595L919 655Q900 620 862 600L865 540Z" fill="#6e6e6e" />
    <path d="M867 535Q908 550 928 588L925 597Q905 558 867 541Z" fill="#808080" />
    <path d="M864 533Q912 550 930 588" />
    {[[874, 549, 604], [882, 554, 609], [889, 560, 615], [896, 566, 622], [903, 573, 630], [910, 581, 639], [918, 590, 650]].map(([x, y1, y2]) => (
      <line key={x} x1={x} y1={y1} x2={x - 3} y2={y2} strokeWidth="2" />
    ))}
    <path d="M866 570Q900 590 921 625M864 590Q900 610 919 645" />
    <path d="M862 598Q895 612 918 655V661Q895 622 861 604Z" fill="#808080" />
    <path d="M928 588L1117 568M925 594L1117 574M925 597L1115 577" />
    <path d="M918 657L1103 636" />

    {/* section outlines */}
    <path d="M994 372Q1080 408 1136 473L953 491Q930 455 887 436" />

    {/* front block */}
    <path d="M427 663L604 560L607 707L597 712L452 805L444 802Z" fill="#fff" stroke="none" />
    <path d="M604 560L607 707" />
    <path d="M424 648L603 551M427 663L606 566M426 646L603 548M428 660L604 561" />
    <path d="M357 577Q390 615 424 648L427 663L444 803Q550 878 686 898V973Q560 945 515 920Q420 862 391 805Z" fill="#808080" />
    <path d="M357 577L358 590Q385 625 427 663M361 592L391 806" />
    <path d="M424 648V663" stroke="#fff" />
    <path d="M359 580Q392 612 424 645" stroke="#fff" />
    {range(6).map((i) => (
      <FacadeWindow key={i} x={367 + i * 5} y={605 + i * 36} w={15} h={23} slope={20} />
    ))}
    {range(6).map((i) => (
      <FacadeWindow key={i} x={395 + i * 5} y={638 + i * 36} w={20} h={22} slope={19} />
    ))}
    {[[591, 577], [592, 615], [594, 650], [596, 690]].map(([x, y]) => (
      <path key={y} d={`M${x} ${y + 4}l10 -5v17l-10 5zM${x + 5} ${y + 2}v17`} fill={y === 690 ? '#fff' : '#777'} strokeWidth="2" />
    ))}

    {/* front wing */}
    <path d="M444 803L597 712L619 692Q660 718 725 728L686 898Q560 880 444 803Z" fill="#fff" />
    <path d="M619 692Q660 718 701 724V731Q655 722 621 698Z" fill="#808080" />
    <path d="M452 805Q560 874 683 895L719 735L706 733M606 704L621 698" />
    <path d="M719 735L682 895H678L715 737Z" fill="#808080" />
    <path d="M686 898L725 728V805L686 973Z" fill="#fff" />
    <path d="M692 914L722 787L725 802L701 915L692 950Z" fill="#000" />
    <path d="M691 893L722 738M688 905L722 750" />
    <path d="M666 905L686 908V973L666 968Z" fill="#fff" stroke="none" />
    <path d="M444 803Q550 878 686 898M444 808Q550 884 686 906M441 800Q550 886 686 908" />
    <path d="M686 898V973" strokeWidth="2" />
    <path d="M383 738Q400 765 445 803M383 741Q400 769 440 803" />
    <FacadeWindow x={456} y={824} w={27} h={18} slope={20} bars={5} />
    <FacadeWindow x={459} y={855} w={27} h={17} slope={19} bars={5} />
    <path
      d={`M511 858${range(9).slice(1).map((i) => `L${511 + i * 19} ${Math.round(wingTop(i / 8))}`).join('')}L666 966${range(8).map((i) => `L${Math.round(514 + (7 - i) * 19)} ${Math.round(wingBottom((7 - i) / 8))}`).join('')}Z`}
      fill="#6a6a6a"
      strokeWidth="2"
    />
    {range(9).map((i) => {
      const x = 512 + i * 19;
      return <line key={i} x1={x} y1={Math.round(wingTop(i / 8))} x2={x + 3} y2={Math.round(wingBottom(i / 8))} strokeWidth="2" />;
    })}
    {[0.42, 0.72].map((t) => (
      <polyline
        key={t}
        points={pts(range(9).map((i) => [513 + i * 19, Math.round(wingTop(i / 8) * (1 - t) + wingBottom(i / 8) * t)]))}
        strokeWidth="2"
      />
    ))}
    <path d="M513 875l14 -8M516 882l12 -12M536 900v20M539 902v20M535 925l24 -16M580 912v9M583 913v6h8v8M602 920v8M640 930h22v12M644 935v8" stroke="#222" />
    <path d="M391 808Q430 880 515 924Q570 950 665 976M391 803Q425 872 515 919Q570 945 686 975" />
    <path d="M444 803L597 712M433 699Q540 785 686 792L723 639Q668 628 619 608" />
  </svg>
);

const ViewCube = () => (
  <div className="absolute top-6 right-6 h-20 w-20">
    <svg viewBox="0 0 80 80" className="h-full w-full" aria-hidden="true">
      <path d="M8 22L44 2l36 19-36 22z" fill="#f7f7f7" stroke="#999" />
      <path d="M8 22l36 21v34L12 58z" fill="#eee" stroke="#999" />
      <path d="M44 43l36-22-4 37-32 19z" fill="#e0e0e0" stroke="#999" />
      <text x="28" y="31" fontSize="11" fill="#999" transform="rotate(-25 28 31)" fontFamily="Open Sans">Сверху</text>
    </svg>
  </div>
);

const NavBar = () => (
  <div className="absolute top-[122px] right-0 flex h-[146px] w-9 flex-col items-center rounded-md border-2 border-[#c4c4c4] bg-[#f6f6f6]">
    <svg viewBox="0 0 34 142" className="h-full w-full" fill="none" stroke="#9a9a9a" strokeWidth="1.5" aria-hidden="true">
      <circle cx="25" cy="6" r="3.5" />
      <rect x="5" y="20" width="18" height="20" rx="7" />
      <circle cx="14" cy="29" r="4.5" />
      <path d="M18 34l3-2h7v8l-3 2h-7z" fill="#a9d2f1" stroke="#7aa8cc" />
      <path d="M11 50h6l-3 3z" fill="#888" stroke="none" />
      <path d="M1 57h28" stroke="#ccc" />
      <path d="M7 66h11v13H7z" fill="#aed69b" stroke="#96b98a" />
      <circle cx="17" cy="76" r="4" fill="#fff" />
      <path d="M20 79l4 4" />
      <path d="M11 92h6l-3 3z" fill="#888" stroke="none" />
      <path d="M1 113l28-14-4 24-9-7-4 6-1-8z" fill="#eee" />
      <circle cx="25" cy="136" r="3.5" />
      <path d="M23 136h4" />
    </svg>
  </div>
);

const TREE = [
  { items: ['В_АР_ПЭ_02 Этаж', 'В_ГП_ПЭ_Генплан', 'В_АР_ПЭ_01 Этаж копия 1', 'В_АР_ПЭ_01 Этаж'] },
  { title: '3D виды (Модель)', open: true, items: ['{3D}', '3D вид 7', '3D вид 6', '3D вид 5', '3D вид 4', '3D вид 3', '3D вид 2', '3D вид 1'] },
  { title: '3D виды (Оформленный)', open: true, items: ['О_3D_Общий вид'] },
  { title: 'Фасады (Модель)', open: true, items: ['Фасад 1 - d', 'Фасад 1 - c', 'Фасад 1 - b', 'Фасад 1 - a', 'В_АР_Ф_Южный', 'В_АР_Ф_Северный', 'В_АР_Ф_Западный', 'В_АР_Ф_Восточный'] },
  { title: 'Фасады (Оформленный)', open: false, items: [] },
  { title: 'Разрезы (Вспомогательный)', open: true, items: ['Разрез 1 копия 1'] },
];

const TreeLeaf = ({ name, last, active, onSelect }) => (
  <li className="flex h-[22px] items-center">
    <span className="flex h-full w-[19px] flex-col">
      <span className="h-1/2 border-b border-l border-dotted border-[#999]" />
      <span className={`h-1/2 ${last ? '' : 'border-l border-dotted border-[#999]'}`} />
    </span>
    <button
      onClick={() => onSelect(name)}
      className={`h-full px-[3px] leading-[22px] ${active ? 'bg-[#e0e0e0] font-bold text-black' : ''}`}
    >
      {name}
    </button>
  </li>
);

const ProjectBrowser = () => {
  const [active, setActive] = useState('3D вид 7');

  return (
    <aside className="absolute top-[67px] right-[34px] flex h-[648px] w-[562px] flex-col border border-[#c2c2c2] bg-[#eee] text-[14px] text-[#1e1e1e] shadow-[0_2px_10px_rgba(0,0,0,0.45)]">
      <div className="flex h-5 items-center justify-between pr-0.5 pl-0.5 text-[#4a4a4a]">
        <h2 className="leading-5">Диспетчер проекта - СПА--ОТЕЛЬ.rvt</h2>
        <button aria-label="Закрыть диспетчер">
          <svg viewBox="0 0 14 14" className="h-3.5 w-3.5">
            <path d="M2 1l10 12M12 1L2 13" stroke="#222" strokeWidth="2.5" />
          </svg>
        </button>
      </div>
      <div className="mx-1.5 flex min-h-0 flex-1 bg-white">
        <div className="flex-1 overflow-hidden pl-2.5">
          <ul className="border-l border-dotted border-[#999] pt-0.5">
            {TREE.map((group, i) => (
              <li key={i} className="ml-[25px]">
                {group.title && (
                  <div className="flex h-[22px] items-center">
                    <span className="flex h-full w-0 flex-col items-center justify-center">
                      <button
                        aria-label={group.open ? 'Свернуть' : 'Развернуть'}
                        className="z-10 flex h-[13px] w-[13px] shrink-0 items-center justify-center border border-[#8c8c8c] bg-[#f6f6f6]"
                      >
                        <svg viewBox="0 0 9 9" className="h-[9px] w-[9px] shrink-0" shapeRendering="crispEdges">
                          <path d={group.open ? 'M0 4.500h9' : 'M0 4.500h9M4.500 0v9'} stroke="#3f4f86" />
                        </svg>
                      </button>
                    </span>
                    <span className="ml-[7px] w-3 border-b border-dotted border-[#999]" />
                    <span className="pl-[3px]">{group.title}</span>
                  </div>
                )}
                <ul className={`border-l border-dotted border-[#999] pl-[25px] ${i === TREE.length - 1 ? 'border-transparent' : ''}`}>
                  {group.items.map((name, k) => (
                    <TreeLeaf
                      key={name}
                      name={name}
                      last={k === group.items.length - 1 && i < TREE.length - 1}
                      active={name === active}
                      onSelect={setActive}
                    />
                  ))}
                </ul>
              </li>
            ))}
          </ul>
        </div>
        <div className="flex w-[19px] flex-col items-center bg-[#f0f0f0] pt-1 pb-0.5">
          <Chevron d="M2 8l4-4 4 4" />
          <div className="mt-[104px] h-[280px] w-full bg-[#cdcdcd]" />
          <Chevron d="M2 4l4 4 4-4" className="mt-auto h-3 w-3" />
        </div>
      </div>
      <div className="mx-1 mt-0.5 mb-1.5 flex h-[27px] shrink-0 bg-[#cdcdcd] text-[#4a4a4a]">
        <button className="w-[79px]">Свойства</button>
        <button className="w-[271px] bg-[#eee] pl-2 text-left">Диспетчер проекта - СПА--ОТЕЛЬ.rvt</button>
      </div>
    </aside>
  );
};

const VIEW_ICONS = ['detail', 'cube', 'sun', 'ball', 'teapot', 'crop', 'cropShow', 'lock3d', 'glasses', 'bulb', 'film', 'analytic', 'displace', 'constraint'];

const ViewBar = () => (
  <div className="flex h-5 shrink-0 items-center bg-[#efefef] text-[13px] text-[#222]">
    <span className="w-[94px] pl-2.5">Перспектива</span>
    <div className="flex gap-[5px]">
      {VIEW_ICONS.map((name) => (
        <button key={name} aria-label={name}>
          <Icon name={name} />
        </button>
      ))}
    </div>
    <Chevron d="M8 2L4 6l4 4" className="ml-1.5 h-3 w-3" />
    <div className="flex h-full flex-1 pl-[704px]">
      <div className="h-full w-[21px] bg-[#cdcdcd]" />
    </div>
    <Chevron d="M4 2l4 4-4 4" className="mr-2.5 h-3 w-3" />
    <svg viewBox="0 0 12 12" className="mr-1 h-3 w-3" aria-hidden="true">
      <path d="M9 1h2v2H9zM5 5h2v2H5zM9 5h2v2H9zM1 9h2v2H1zM5 9h2v2H5zM9 9h2v2H9z" fill="#b5b5b5" />
    </svg>
  </div>
);

const Combo = ({ label, width, options }) => (
  <div className={`flex h-[22px] items-center bg-white pr-1 ${width}`}>
    <select
      aria-label={label}
      className="h-full flex-1 appearance-none rounded-none bg-white pl-0.5 text-[14px] text-[#8a8a8a] outline-none"
    >
      {options.map((o) => (
        <option key={o}>{o}</option>
      ))}
    </select>
    <span className="mr-1.5 h-full w-px bg-[#e6e6e6]" />
    <svg viewBox="0 0 10 6" className="h-1.5 w-2.5" aria-hidden="true">
      <path d="M1 1l4 4 4-4" fill="none" stroke="#8a8a8a" strokeWidth="1.5" />
    </svg>
  </div>
);

const STATUS_ICONS = ['selLink', 'selUnder', 'selPin', 'selFace', 'selDrag', 'gear'];

const StatusBar = () => (
  <footer className="flex h-[35px] shrink-0 items-center border-t-2 border-b border-t-[#fafafa] border-b-[#20252b] bg-[#cdcdcd] text-[14px] text-[#222]">
    <p className="w-[553px] pl-[3px] whitespace-nowrap">
      Щелчок - выбор, TAB - варианты, CTRL - добавление, SHIFT - снятие выбора.
    </p>
    <Icon name="worksets" className="mr-2 h-5 w-5" />
    <Combo label="Рабочий набор" width="w-[255px]" options={['']} />
    <Icon name="editable" className="ml-2 h-5 w-5" />
    <span className="ml-1.5 w-[35px]">:0</span>
    <Icon name="options" />
    <Icon name="optionDim" className="ml-2.5 h-5 w-5" />
    <div className="ml-2">
      <Combo label="Вариант конструкции" width="w-[255px]" options={['Главная модель']} />
    </div>
    <div className="ml-auto flex items-center gap-2.5 pr-[76px]">
      {STATUS_ICONS.map((name) => (
        <button key={name} aria-label={name}>
          <Icon name={name} />
        </button>
      ))}
      <button className="flex items-center text-[#444]">
        <Icon name="funnel" />
        :0
      </button>
    </div>
  </footer>
);

const App = () => {
  const [tab, setTab] = useState('Архитектура');

  return (
    <div className="flex h-screen flex-col overflow-hidden bg-[#eee] font-['Open_Sans','Noto_Sans_CJK_KR',sans-serif]">
      <TitleBar />
      <RibbonTabs active={tab} onSelect={setTab} />
      <Ribbon />
      <div className="h-[34px] shrink-0 bg-[#eee]" />
      <DocTabs />
      <main className="flex min-h-0 flex-1">
        <div className="relative flex-1 overflow-hidden bg-white">
          <Building />
          <ViewCube />
          <NavBar />
          <ProjectBrowser />
        </div>
        <div className="flex w-5 flex-col items-center bg-[#f0f0f0] pt-2 pb-1">
          <Chevron d="M2 8l4-4 4 4" />
          <div className="mt-[337px] h-[21px] w-full bg-[#cdcdcd]" />
          <Chevron d="M2 4l4 4 4-4" className="mt-auto h-3 w-3" />
        </div>
      </main>
      <ViewBar />
      <div className="h-px shrink-0 bg-[#bdbdbd]" />
      <StatusBar />
    </div>
  );
};

export default App;
